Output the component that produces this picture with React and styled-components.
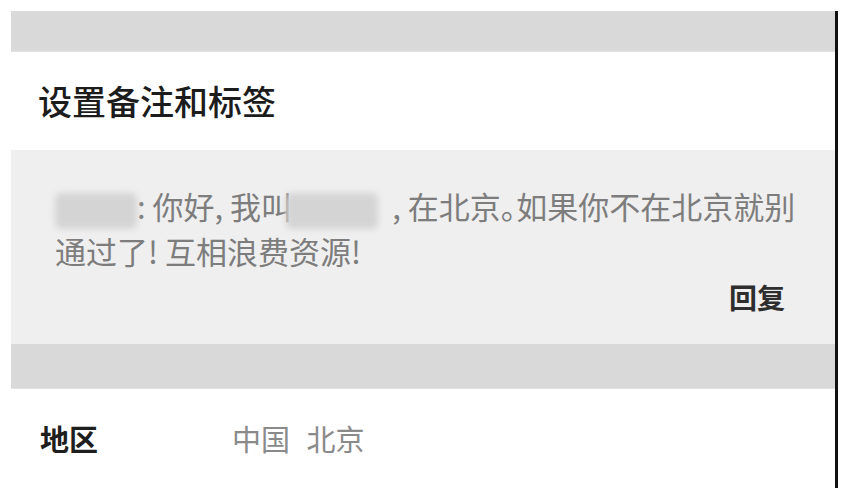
import React from "react";
import styled, { createGlobalStyle } from "styled-components";

const GlobalStyle = createGlobalStyle`
  html, body {
    margin: 0;
    padding: 0;
    background: #ffffff;
  }
  body {
    font-family: "Noto Sans CJK SC", "Noto Sans", sans-serif;
  }
`;

const Screen = styled.div`
  width: 842px;
  height: 488px;
  overflow: hidden;
  background: #ffffff;
`;

const Frame = styled.div`
  margin: 11px 0 0 11px;
  width: 824px;
  height: 477px;
  border-right: 3px solid #111111;
  display: flex;
  flex-direction: column;
`;

const Spacer = styled.div`
  height: ${(p) => p.h}px;
  background: #d9d9d9;
  border-bottom: 1px solid #e2e2e2;
  flex-shrink: 0;
`;

const Header = styled.div`
  height: 98px;
  display: flex;
  align-items: center;
  padding-left: 27px;
  background: #ffffff;
  flex-shrink: 0;
`;

const Title = styled.h1`
  margin: 0;
  font-size: 34px;
  font-weight: 500;
  color: #1c1c1c;
  line-height: 1;
`;

const Message = styled.div`
  height: 194px;
  box-sizing: border-box;
  padding: 34px 24px 0 44px;
  background: #efefef;
  display: flex;
  flex-direction: column;
  flex-shrink: 0;
`;

const MessageText = styled.p`
  margin: 0;
  font-size: 31px;
  line-height: 43px;
  color: #7d7d7d;
  font-feature-settings: "halt";
`;

const Line = styled.span`
  display: block;
  white-space: nowrap;
`;

const Redacted = styled.span`
  display: inline-block;
  width: ${(p) => p.w}px;
  height: 36px;
  margin-left: ${(p) => p.ml || 0}px;
  margin-right: ${(p) => p.mr || 0}px;
  vertical-align: middle;
  background: #d4d4d4;
  filter: blur(3px);
  border-radius: 6px;
`;

const Reply = styled.button`
  align-self: flex-end;
  margin: 4px 26px 0 0;
  padding: 0;
  border: none;
  background: transparent;
  font-family: inherit;
  font-size: 28px;
  line-height: 43px;
  font-weight: 700;
  color: #2e2e2e;
  cursor: pointer;
`;

const Row = styled.div`
  height: 98px;
  display: flex;
  align-items: center;
  padding-left: 29px;
  background: #ffffff;
  flex-shrink: 0;
`;

const Label = styled.span`
  width: 192px;
  font-size: 29px;
  font-weight: 700;
  color: #1e1e1e;
`;

const Value = styled.span`
  font-size: 29px;
  color: #8a8a8a;
  word-spacing: 10px;
`;

export default function App() {
  return (
    <Screen>
      <GlobalStyle />
      <Frame>
        <Spacer h={40} />
        <Header>
          <Title>设置备注和标签</Title>
        </Header>
        <Message>
          <MessageText>
            <Line>
              <Redacted w={82} />
              {": 你好, 我叫"}
              <Redacted w={92} ml={-6} mr={14} />
              {", 在北京。如果你不在北京就别"}
            </Line>
            <Line>通过了! 互相浪费资源!</Line>
          </MessageText>
          <Reply>回复</Reply>
        </Message>
        <Spacer h={44} />
        <Row>
          <Label>地区</Label>
          <Value>中国 北京</Value>
        </Row>
      </Frame>
    </Screen>
  );
}
